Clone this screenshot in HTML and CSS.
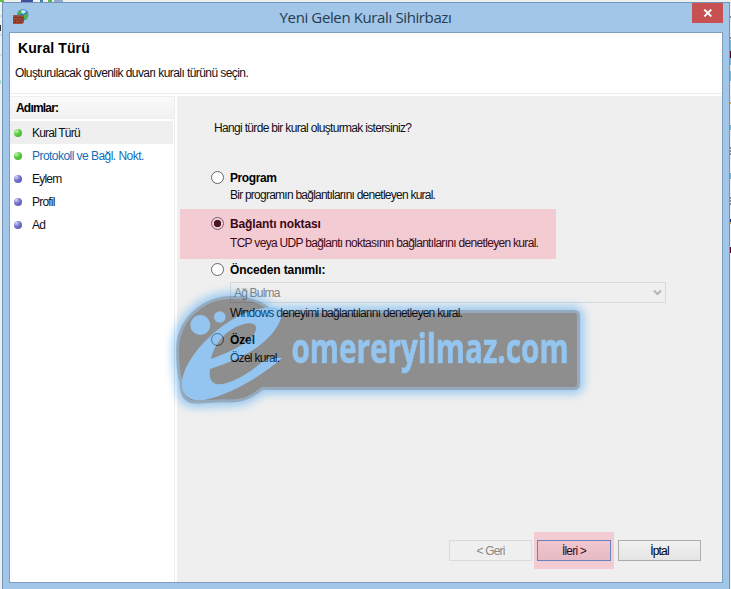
FILE: index.html
```html
<!DOCTYPE html>
<html lang="tr">
<head>
<meta charset="utf-8">
<title>Yeni Gelen Kuralı Sihirbazı</title>
<link rel="stylesheet" href="styles.css">
</head>
<body>
<div class="desktop">
  <svg class="behind" width="731" height="589" aria-hidden="true">
    <rect width="731" height="589" fill="#eeeff1"/>
    <rect width="4" height="2" fill="#65bf43"/><rect x="21" width="12" height="2" fill="#4350a1"/><rect x="40" width="3" height="2" fill="#477db0"/><rect x="48" width="4" height="2" fill="#5db74e"/><rect x="54" width="9" height="2" fill="#92abc7"/>
    <path d="M0 16h2M0 35h2M0 55h2" stroke="#bfc3c6"/><rect y="25" width="1" height="6" fill="#333"/><rect y="80" width="1" height="4" fill="#a5d7bd"/>
    <path d="M730 17h1M730 38h1M730 76h1M730 148h1M730 151h1M730 154h1M730 198h1M730 201h1M730 204h1" stroke="#202020"/>
    <path d="M730.500 40v25M730.500 71v10M730.500 125v5M730.500 173v6" stroke="#77b9d9"/><path d="M730.500 51v7M730.500 247v6" stroke="#600026"/><path d="M730.500 102v2M730.500 222v2" stroke="#e4a541"/><path d="M730.500 219v3" stroke="#17337a"/>
  </svg>
  <div class="window">
    <div class="titlebar">
      <svg class="app-icon" width="16" height="16" viewBox="0 0 16 16" aria-hidden="true">
        <circle cx="9.800" cy="5.800" r="5.600" fill="#2f83c8"/><path d="M5 3Q7 .5 10 1L9 4 6 6 4.500 5ZM11 6l3-2 1.300 3-2 4-3-2Z" fill="#4fb350"/><path d="M9 1q4 0 4 2l-3 2-2-2Z" fill="#c6ecf6"/>
        <path d="M0 6l9 .5 2-.8v7.800l-2 1.500H0Z" fill="#b04f38"/><path d="M0 8.500h11M0 11h11M0 13.300h10M3 6v2.500M7 6.500v2M5 8.500V11M9 8.500V11M2.500 11v2.300M7 11v2.300" stroke="#6b302a" stroke-width=".8"/>
      </svg>
      <div class="caption">Yeni Gelen Kuralı Sihirbazı</div>
      <div class="close"><svg width="10" height="8" viewBox="0 0 10 8"><path d="M1.300.5l7 7M8.300.5l-7 7" stroke="#fff" stroke-width="1.800"/></svg></div>
    </div>
    <div class="client">
      <header class="head">
        <h1>Kural Türü</h1>
        <p>Oluşturulacak güvenlik duvarı kuralı türünü seçin.</p>
      </header>
      <div class="body">
        <nav class="steps">
          <div class="steps-title">Adımlar:</div>
          <div class="step current"><i class="dot green"></i><span>Kural Türü</span></div>
          <div class="step link"><i class="dot green"></i><span>Protokoll ve Bağl. Nokt.</span></div>
          <div class="step"><i class="dot"></i><span>Eylem</span></div>
          <div class="step"><i class="dot"></i><span>Profil</span></div>
          <div class="step"><i class="dot"></i><span>Ad</span></div>
        </nav>
        <main class="page">
          <p class="question">Hangi türde bir kural oluşturmak istersiniz?</p>
          <div class="option program"><i class="radio"></i><div><b>Program</b><p>Bir programın bağlantılarını denetleyen kural.</p></div></div>
          <div class="option port"><i class="radio"></i><div><b>Bağlantı noktası</b><p>TCP veya UDP bağlantı noktasının bağlantılarını denetleyen kural.</p></div></div>
          <div class="option preset"><i class="radio"></i><div><b>Önceden tanımlı:</b>
            <div class="select"><span>Ağ Bulma</span><svg width="9" height="7" viewBox="0 0 9 7"><path d="M1 1.500L4.500 5 8 1.500" fill="none" stroke="#b3b3b3" stroke-width="2"/></svg></div>
            <p>Windows deneyimi bağlantılarını denetleyen kural.</p></div></div>
          <div class="option custom"><i class="radio clear"></i><div><b>Özel</b><p>Özel kural.</p></div></div>
          <footer class="actions">
            <div class="button disabled">&lt; Geri</div>
            <div class="next"><div class="button primary">İleri &gt;</div></div>
            <div class="button">İptal</div>
          </footer>
        </main>
      </div>
    </div>
  </div>
  <svg class="watermark" width="731" height="589" viewBox="0 0 731 589">
    <defs>
      <filter id="glow" x="-20%" y="-40%" width="140%" height="180%"><feGaussianBlur stdDeviation="5"/></filter>
      <path id="plate" d="M232 297.500C252 297.500 263 303 272 311.500H574Q578.500 311.500 578.500 316V384Q578.500 388.500 574 388.500H262C253 396 244 401 229 401C219 400 205 402 195 402C185 402 181 394 181 382C178 372 177.500 361 177.500 350C177.500 321 202 297.500 232 297.500Z"/>
    </defs>
    <use href="#plate" fill="#0b89f2" stroke="#0b89f2" stroke-width="10" filter="url(#glow)"/>
    <use href="#plate" fill="#000" stroke="#114675" stroke-width="3"/>
    <g fill="#0b89f2">
      <circle cx="200.300" cy="325" r="10"/><circle cx="219.800" cy="317" r="5.800"/>
      <path fill-rule="evenodd" d="M281 310C269 303 242 311 220 328C198 345 183 367 182 382C181 395 190 402 204 400C230 395 262 376 282 358C274 358 269 357 262 362C246 376 226 386 216 384C210 382 209 376 210 369C234 361 254 352 268 338C279 327 284 314 281 310ZM211 359C214 343 228 328 244 324C252 322 257 324 256 329C255 339 236 350 211 359Z"/>
      <text x="291.500" y="362.500" textLength="277" lengthAdjust="spacingAndGlyphs">omereryilmaz.com</text>
    </g>
  </svg>
</div>
</body>
</html>
```
FILE: styles.css
```css
* { box-sizing: border-box; }
body { margin: 0; overflow: hidden; font: 12px/14px "Liberation Sans", Arial, sans-serif; color: #101018; }
p, h1 { margin: 0; }
b { display: block; width: max-content; }
.desktop { position: relative; width: 731px; height: 589px; padding: 2px 0 0 2px; overflow: hidden; }
.behind, .watermark { position: absolute; left: 0; top: 0; }
.window { position: relative; width: 728px; height: 600px; border: 1px solid #7196b9; background: #a1c6e8; padding: 0 7px 0 6px; white-space: nowrap; }
.titlebar { height: 29px; display: flex; align-items: flex-start; }
.app-icon { margin: 6px 0 0 4px; flex: none; }
.caption { flex: 1; margin-left: 10px; padding-top: 3px; text-align: center; font: 15px/22px "Open Sans", sans-serif; letter-spacing: -.38px; color: #263c50; }
.close { width: 31px; height: 20px; margin-right: -1px; background: #c75050; display: flex; align-items: center; justify-content: center; }
.client { width: 714px; height: 551px; border: 1px solid #7d9fbe; background: #fff; }
.head { height: 61px; border-bottom: 1px solid #ececec; padding: 7px 0 0 5px; }
.head h1 { font-size: 14px; line-height: 17px; font-weight: bold; padding-left: 3px; letter-spacing: .1px; color: #000; }
.head p { margin-top: 9px; letter-spacing: -.58px; }
.body { display: flex; height: 488px; padding-top: 2px; }
.steps { width: 165px; border-right: 1px solid #ececec; margin-right: 2px; }
.steps-title { height: 23px; padding: 4px 6px; border: 1px solid #eee; border-width: 1px 0; font-weight: bold; color: #000; background: linear-gradient(#fafafa, #f1f1f1); margin-bottom: 2px; letter-spacing: -.8px; }
.step { height: 23px; display: flex; align-items: center; gap: 10px; padding-left: 4px; letter-spacing: -.8px; }
.current { background: #efefef; width: 163px; }
.link { color: #136cba; letter-spacing: -.54px; }
.dot { width: 8px; height: 8px; border-radius: 50%; background: radial-gradient(circle at 30% 25%, #d4d5f3 0, #7070ce 45%, #5554b6 100%); }
.green { background: radial-gradient(circle at 30% 25%, #c6f1b7 0, #56cc3d 45%, #3da72c 100%); }
.page { flex: 1; background: #efefef; padding-top: 25px; }
.question { margin-left: 37px; letter-spacing: -.67px; }
.option { display: flex; gap: 6px; padding-left: 34px; }
.option b { color: #000; letter-spacing: -.12px; }
.option p { letter-spacing: -.72px; }
.radio { width: 13px; height: 13px; border: 1px solid #666; border-radius: 50%; background: #fff; flex: none; }
.clear { background: none; }
.port .radio { background: radial-gradient(circle, #4c1827 0 3.400px, #f3ccd4 4px); border-color: #79606a; }
.program { margin-top: 36px; }
.program b { letter-spacing: -.4px; }
.program p { margin-top: 3px; letter-spacing: -.76px; }
.port { width: 376px; height: 50px; margin: 7px 0 0 3px; padding: 8px 0 0 31px; background: #f3cbd3; }
.port b, .port p { color: #3b0916; }
.port p { margin-top: 5px; letter-spacing: -.69px; }
.preset { margin-top: 4px; }
.select { width: 436px; height: 21px; margin: 5px 0 3px; border: 1px solid #d9d9d9; padding: 0 3px; display: flex; align-items: center; justify-content: space-between; color: #838383; letter-spacing: -.8px; }
.custom { margin-top: 13px; }
.custom p { margin-top: 4px; }
.actions { display: flex; align-items: center; margin: 167px 0 0 272px; height: 37px; }
.button { width: 83px; height: 21px; border: 1px solid #acacac; background: linear-gradient(#f1f1f1, #e4e4e4); line-height: 20px; text-align: center; letter-spacing: -.8px; color: #000; }
.disabled { background: #efefef; border-color: #dadada; color: #888; }
.next { width: 80px; height: 37px; padding: 8px 3px; background: #f3cbd3; margin: 0 4px 0 2px; }
.primary { width: 74px; border-color: #6782bd; background: linear-gradient(#f0c5cd, #e6bbc5); color: #3b0916; }
.watermark { opacity: .4; pointer-events: none; }
.watermark text { font: bold 42px "Open Sans", sans-serif; stroke: #0b89f2; stroke-width: .7px; }
```
